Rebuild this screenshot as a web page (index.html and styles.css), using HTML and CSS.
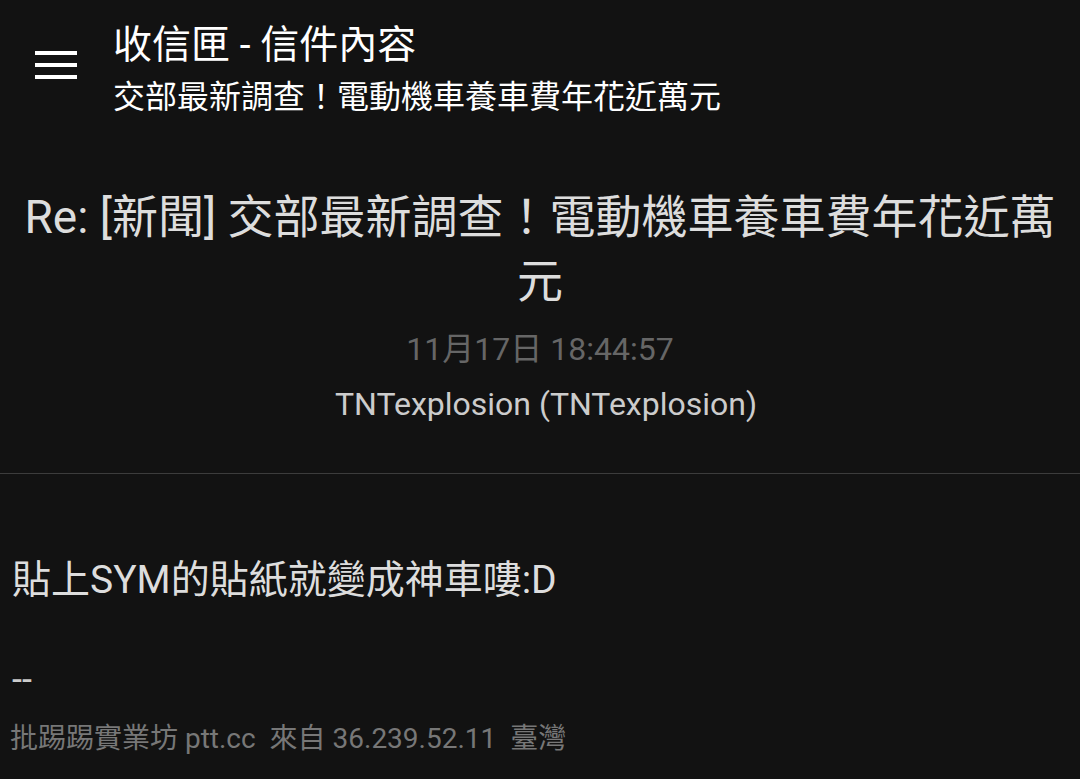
FILE: index.html
```html
<!DOCTYPE html>
<html lang="zh-Hant">
<head>
    <meta charset="UTF-8">
    <meta name="viewport" content="width=device-width, initial-scale=1.0">
    <title>收信匣 - 信件內容</title>
    <link rel="stylesheet" href="styles.css">
</head>
<body>
    <header class="topbar">
        <div class="menu-icon">
            <span></span>
            <span></span>
            <span></span>
        </div>
        <div class="topbar-text">
            <div class="topbar-title">收信匣 - 信件內容</div>
            <div class="topbar-subtitle">交部最新調查！電動機車養車費年花近萬元</div>
        </div>
    </header>

    <section class="mail-head">
        <h1 class="mail-title">Re: [新聞] 交部最新調查！電動機車養車費年花近萬元</h1>
        <div class="mail-date">11月17日 18:44:57</div>
        <div class="mail-author">TNTexplosion (TNTexplosion)</div>
    </section>

    <hr class="divider">

    <article class="mail-body">
        <p class="body-text">貼上SYM的貼紙就變成神車嘍:D</p>
        <p class="signature">--</p>
        <p class="footer-line">批踢踢實業坊 ptt.cc  來自 36.239.52.11  臺灣</p>
    </article>
</body>
</html>
```

FILE: styles.css
```css
* {
    margin: 0;
    padding: 0;
    box-sizing: border-box;
}

body {
    font-family: Roboto, "Noto Sans CJK TC", sans-serif;
    background: #121212;
    color: #dddddd;
    width: 1080px;
    height: 779px;
    overflow: hidden;
}

/* Top bar */
.topbar {
    display: flex;
    align-items: flex-start;
    padding: 21px 0 0 35px;
}

.menu-icon {
    display: flex;
    flex-direction: column;
    gap: 8px;
    width: 42px;
    margin-top: 30px;
    margin-right: 36px;
}

.menu-icon span {
    display: block;
    height: 4px;
    background: #ffffff;
}

.topbar-title {
    font-size: 39px;
    line-height: 48px;
    color: #ffffff;
}

.topbar-subtitle {
    font-size: 32px;
    line-height: 48px;
    margin-top: 4px;
    color: #ffffff;
}

/* Mail header */
.mail-head {
    text-align: center;
    padding: 0 16px;
}

.mail-title {
    font-size: 46px;
    font-weight: 400;
    line-height: 64px;
    margin-top: 64px;
    color: #dddddd;
}

.mail-date {
    font-size: 32px;
    line-height: 44px;
    margin-top: 14px;
    color: #666666;
}

.mail-author {
    font-size: 32px;
    line-height: 44px;
    margin-top: 11px;
    padding-left: 12px;
    color: #cccccc;
}

.divider {
    border: none;
    border-top: 1px solid #3c3c3c;
    margin-top: 47px;
}

/* Mail content */
.mail-body {
    padding: 0 12px;
}

.body-text {
    font-size: 39px;
    line-height: 50px;
    margin-top: 81px;
    color: #dddddd;
}

.signature {
    font-size: 36px;
    line-height: 50px;
    margin-top: 50px;
    color: #cccccc;
}

.footer-line {
    font-size: 28px;
    line-height: 40px;
    margin-top: 14px;
    padding-left: 0;
    margin-left: -2px;
    color: #777777;
    white-space: pre;
}
```
